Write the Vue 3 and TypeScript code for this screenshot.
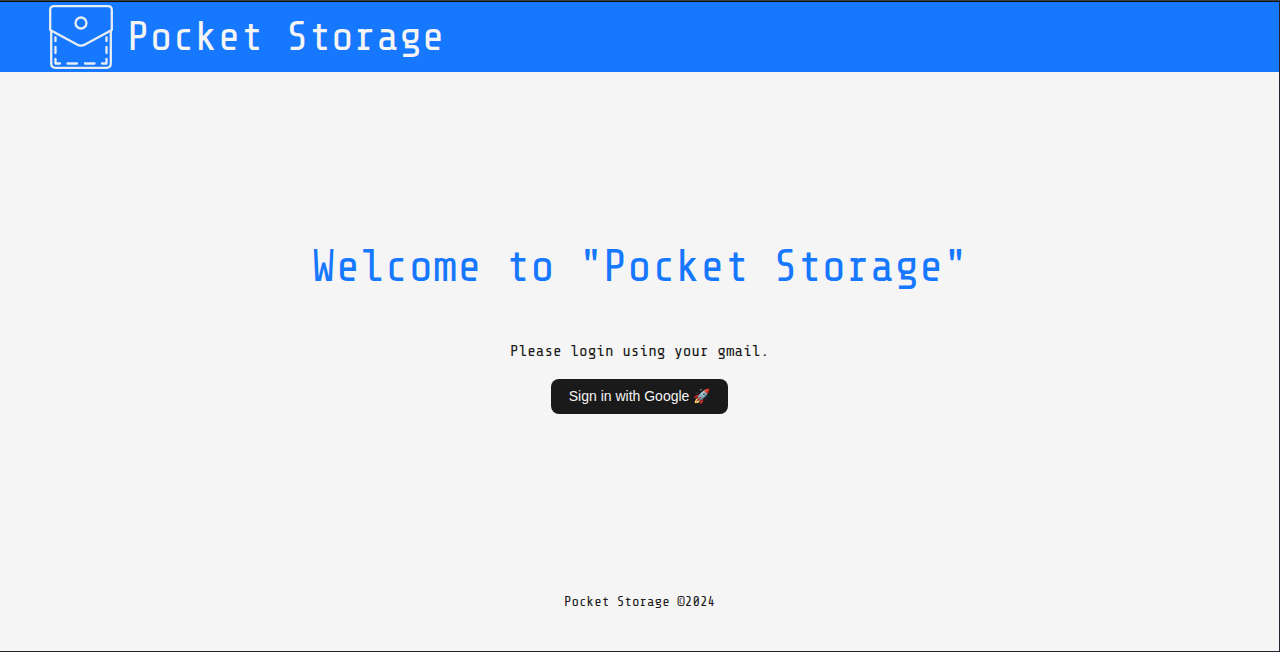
<script setup lang="ts">
const brand: string = 'Pocket Storage'
const year: number = 2024

function signIn(): void {
  window.dispatchEvent(new CustomEvent('sign-in'))
}
</script>

<template>
  <div class="layout">
    <header class="header">
      <svg class="logo" viewBox="0 0 64 64" fill="none" aria-hidden="true">
        <g stroke="#e8edf4" stroke-width="2.300" stroke-linejoin="round" stroke-linecap="round">
          <path d="M5 1.200H59Q62.800 1.200 62.800 5V25L36 39.600Q32 41.600 28 39.600L1.200 25V5Q1.200 1.200 5 1.200Z" />
          <path d="M2.200 26V58.500Q2.200 62.800 6.500 62.800H57.500Q61.800 62.800 61.800 58.500V26" />
          <circle cx="32" cy="18" r="5.500" />
          <path d="M6.500 32.500V36M6.500 42V48M6.500 54V58.500H11M18.500 58.500H28M36 58.500H45.500M53 58.500H57.500V54M57.500 48V42M57.500 36V32.500" />
        </g>
      </svg>
      <span class="brand">{{ brand }}</span>
    </header>
    <main class="content">
      <h1 class="title">Welcome to "{{ brand }}"</h1>
      <p class="hint">Please login using your gmail.</p>
      <button class="sign-in" type="button" @click="signIn">Sign in with Google 🚀</button>
    </main>
    <footer class="footer">{{ brand }} ©{{ year }}</footer>
  </div>
</template>

<style>
body {
  margin: 0;
}
</style>

<style scoped>
.layout {
  box-sizing: border-box;
  min-height: 100vh;
  display: flex;
  flex-direction: column;
  background: #f5f5f5;
  color: #1a1a1a;
  border-top: 1px solid #3c4043;
  border-right: 1px solid #23222e;
  border-bottom: 1px solid #23222e;
  font-family: "Share Tech Mono", "DejaVu Sans Mono", monospace;
}

.header {
  box-sizing: border-box;
  height: 71px;
  display: flex;
  align-items: center;
  gap: 14px;
  padding: 0 49px;
  background: #1677ff;
  border-top: 1px solid #101014;
}

.logo {
  width: 64px;
  height: 64px;
  flex: none;
}

.brand {
  color: #f5f5f5;
  font-size: 42px;
  line-height: 64px;
}

.content {
  flex: 1;
  display: flex;
  flex-direction: column;
  align-items: center;
  justify-content: center;
  text-align: center;
}

.title {
  margin: 32px 0 48px;
  color: #1677ff;
  font-size: 45px;
  font-weight: 400;
  line-height: 48px;
}

.hint {
  margin: 0 0 16px;
  font-size: 16px;
  line-height: 24px;
}

.sign-in {
  padding: 8px 18px;
  border: 0;
  border-radius: 8px;
  background: #1a1a1a;
  color: #f5f5f5;
  font-family: "Liberation Sans", Arial, sans-serif;
  font-size: 14px;
  line-height: 19px;
  cursor: pointer;
}

.footer {
  padding: 37px 48px;
  font-size: 14px;
  line-height: 24px;
  text-align: center;
}
</style>
